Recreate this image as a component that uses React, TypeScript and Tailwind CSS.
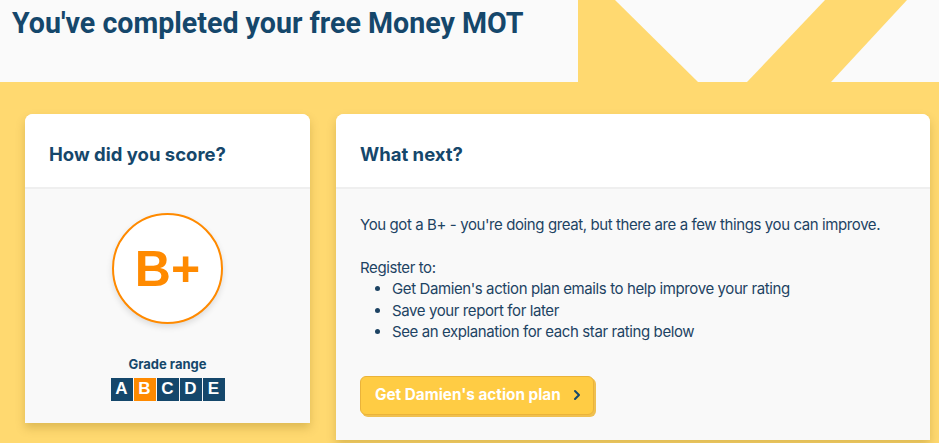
import { ChevronRight } from "lucide-react"

const grades = ["A", "B", "C", "D", "E"]

function Decoration() {
  return (
    <svg className="block h-[82px] w-full" viewBox="0 0 361 82" preserveAspectRatio="none">
      <rect x="0" y="0" width="361" height="82" fill="#ffd970" />
      <polygon points="37,0 247,0 169,82 120,82" fill="#fafafa" />
      <polygon points="329,0 361,0 361,82 253,82" fill="#fafafa" />
    </svg>
  )
}

export default function App() {
  return (
    <div className="min-h-[443px] w-[939px] overflow-hidden bg-[#ffd970] font-['Inter',sans-serif] text-[#1d4363]">
      <div className="flex h-[82px]">
        <div className="w-[578px] bg-[#fafafa] pl-3 pt-[5px]">
          <h1 className="font-['Roboto',sans-serif] text-[28.6px] font-bold leading-9 text-[#15476b]">
            You've completed your free Money MOT
          </h1>
        </div>
        <div className="flex-1">
          <Decoration />
        </div>
      </div>

      <div className="flex gap-[26px] pl-[25px] pt-8">
        <div className="h-[309px] w-[285px] overflow-hidden rounded-t-lg bg-[#f9f9f9] shadow-[0_5px_10px_rgba(120,90,0,0.25)]">
          <div className="flex h-[75px] items-center border-b-2 border-[#efefef] bg-white px-6 pt-[9px]">
            <h2 className="text-[18.5px] font-bold text-[#15476b]">How did you score?</h2>
          </div>
          <div className="flex flex-col items-center pt-6">
            <div className="flex h-[111px] w-[111px] items-center justify-center rounded-full border-2 border-[#ff8a00] bg-white shadow-[0_3px_6px_rgba(0,0,0,0.12)]">
              <span className="font-['Liberation_Sans',sans-serif] text-[50px] font-bold leading-none text-[#ff8a00]">B+</span>
            </div>
            <p className="mt-[31px] text-[13px] font-bold text-[#15476b]">Grade range</p>
            <div className="mt-[3px] flex gap-px">
              {grades.map((g) => (
                <div
                  key={g}
                  className={`flex h-[23px] w-[22px] items-center justify-center font-['Liberation_Sans',sans-serif] text-[17px] font-bold text-white ${
                    g === "B" ? "bg-[#ff8a00]" : "bg-[#15476b]"
                  }`}
                >
                  {g}
                </div>
              ))}
            </div>
          </div>
        </div>

        <div className="h-[326px] w-[594px] overflow-hidden rounded-t-lg bg-[#f9f9f9] shadow-[0_5px_10px_rgba(120,90,0,0.25)]">
          <div className="flex h-[75px] items-center border-b-2 border-[#efefef] bg-white px-6 pt-[9px]">
            <h2 className="text-[18.5px] font-bold text-[#15476b]">What next?</h2>
          </div>
          <div className="px-6 pt-[25px] text-[15px] leading-[21.5px] tracking-[-0.4px] text-[#1d4363]">
            <p>You got a B+ - you're doing great, but there are a few things you can improve.</p>
            <p className="mt-[21px]">Register to:</p>
            <ul className="list-disc pl-8">
              <li>Get Damien's action plan emails to help improve your rating</li>
              <li>Save your report for later</li>
              <li>See an explanation for each star rating below</li>
            </ul>
            <button className="mt-[33px] flex h-[39px] w-[234px] items-center justify-between rounded-md border border-[#eab33a] bg-[#ffcc44] pl-[14px] pr-2 tracking-normal shadow-[2px_2px_0_#f0c050]">
              <span className="text-[15.3px] font-bold text-white">Get Damien's action plan</span>
              <ChevronRight className="h-4 w-4 text-[#15476b]" strokeWidth={3} />
            </button>
          </div>
        </div>
      </div>
    </div>
  )
}
